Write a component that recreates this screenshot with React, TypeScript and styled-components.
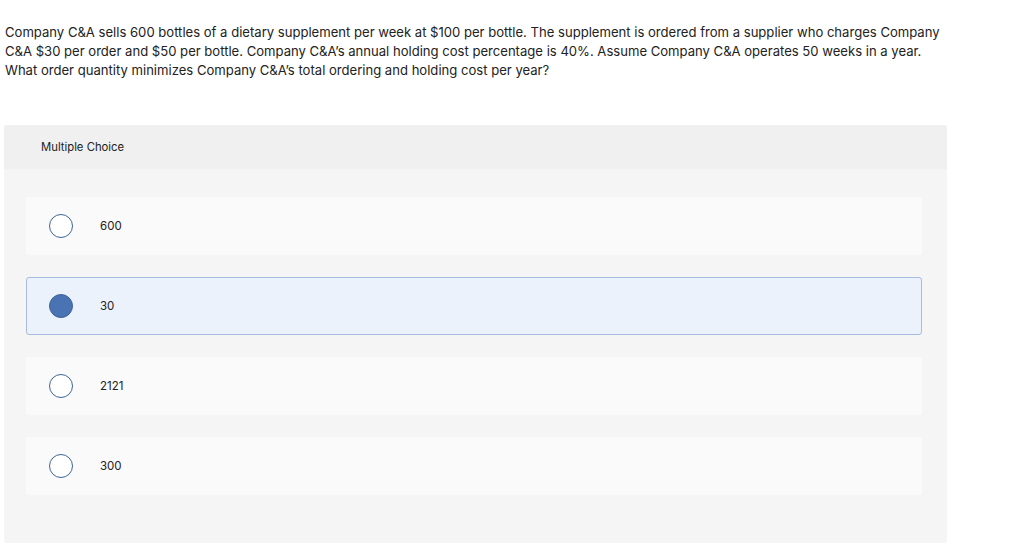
import styled, { createGlobalStyle } from 'styled-components';

const GlobalStyle = createGlobalStyle`
    html, body {
        margin: 0;
        padding: 0;
        background: #ffffff;
    }
    body {
        font-family: "Inter", "Liberation Sans", sans-serif;
        color: #222222;
    }
`

type Option = {
    label: string;
    selected?: boolean;
}

const questionLines = [
    'Company C&A sells 600 bottles of a dietary supplement per week at $100 per bottle. The supplement is ordered from a supplier who charges Company',
    'C&A $30 per order and $50 per bottle. Company C&A’s annual holding cost percentage is 40%. Assume Company C&A operates 50 weeks in a year.',
    'What order quantity minimizes Company C&A’s total ordering and holding cost per year?',
]

const options: Array<Option> = [
    { label: '600' },
    { label: '30', selected: true },
    { label: '2121' },
    { label: '300' },
]

export default function App() {
    return (
        <>
            <GlobalStyle />
            <Page>
                <Question>
                    {questionLines.map((line, index) => (
                        <QuestionLine key={index}>{line}</QuestionLine>
                    ))}
                </Question>
                <Panel>
                    <PanelHeader>Multiple Choice</PanelHeader>
                    <OptionList>
                        {options.map((option, index) => (
                            <OptionCard key={index} $selected={option.selected}>
                                <Radio $selected={option.selected} />
                                <OptionLabel>{option.label}</OptionLabel>
                            </OptionCard>
                        ))}
                    </OptionList>
                </Panel>
            </Page>
        </>
    );
}

const Page = styled.div`
    width: 1024px;
    height: 546px;
    overflow: hidden;
    padding: 23px 0 0 4px;
    box-sizing: border-box;
`

const Question = styled.div`
    margin: 0 0 0 1px;
    font-size: 13.08px;
    line-height: 19px;
    color: #222222;
`

const QuestionLine = styled.div`
    white-space: nowrap;
`

const Panel = styled.div`
    margin-top: 45px;
    width: 943px;
    height: 418px;
    background: #f5f5f5;
    border-radius: 3px;
`

const PanelHeader = styled.div`
    height: 44px;
    display: flex;
    align-items: center;
    padding-left: 37px;
    background: #f0f0f0;
    border-radius: 3px 3px 0 0;
    font-size: 11.3px;
    color: #222222;
`

const OptionList = styled.div`
    display: flex;
    flex-direction: column;
    gap: 22px;
    padding: 28px 25px 0 22px;
`

const OptionCard = styled.div<{ $selected?: boolean }>`
    height: 58px;
    box-sizing: border-box;
    display: flex;
    align-items: center;
    padding-left: 22px;
    border-radius: 3px;
    background: ${(p) => (p.$selected ? '#ebf2fb' : '#fafafa')};
    border: 1px solid ${(p) => (p.$selected ? '#a6bddf' : 'transparent')};
`

const Radio = styled.span<{ $selected?: boolean }>`
    width: 24px;
    height: 24px;
    box-sizing: border-box;
    border-radius: 50%;
    border: 1px solid #3d6398;
    background: ${(p) => (p.$selected ? '#4a73b3' : '#ffffff')};
    flex-shrink: 0;
`

const OptionLabel = styled.span`
    margin-left: 27px;
    font-size: 11.5px;
    color: #222222;
`
